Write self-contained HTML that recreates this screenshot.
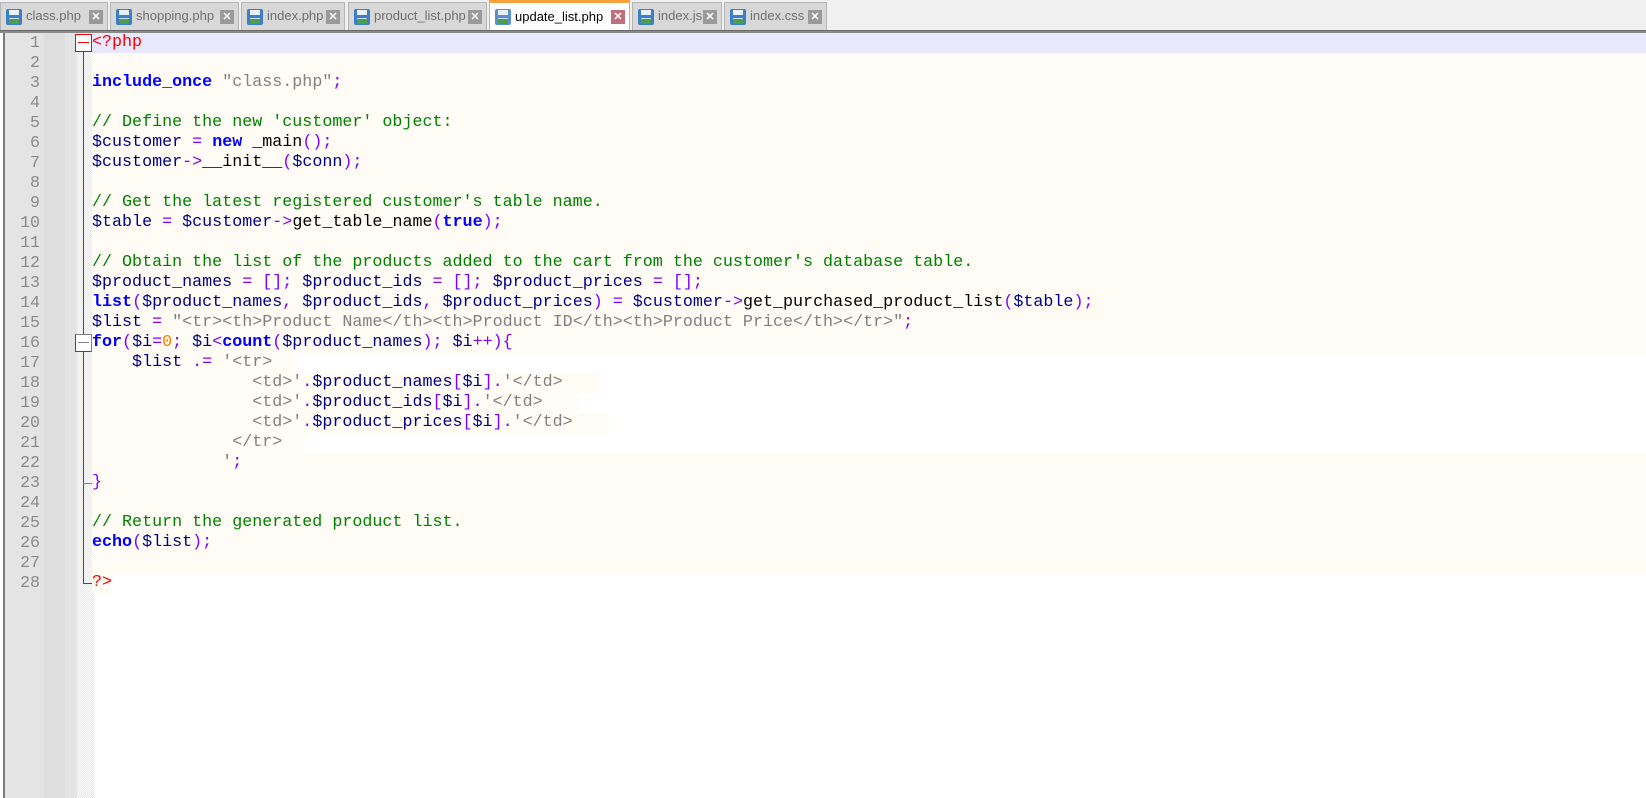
<!DOCTYPE html>
<html><head><meta charset="utf-8"><style>
*{margin:0;padding:0;box-sizing:border-box}
body{width:1646px;height:796px;background:#fff;position:relative;overflow:hidden;font-family:"Liberation Mono",monospace}
#tabs{position:absolute;left:0;top:0;width:1646px;height:30px;background:#f0f0f0}
.tab{position:absolute;top:2px;height:28px;background:#d8d8d8;border:1px solid #b5b5b5;border-bottom:none;font:13px "Liberation Sans",sans-serif;color:#6f6f6f;line-height:26px;padding-left:25px}
.tab .ic{position:absolute;left:5px;top:6px;width:16px;height:16px;background:#3d7fc4;border-radius:2px}
.tab .ic:before{content:"";position:absolute;left:3px;top:1px;width:10px;height:5px;background:#e8f0f8}
.tab .ic:after{content:"";position:absolute;left:3px;top:9px;width:10px;height:5px;background:#4aa04a;border-top:1px solid #cde}
.tab .x{position:absolute;right:4px;top:7px;width:14px;height:14px;background:#9a9a9a;color:#fff;font-size:11px;line-height:14px;text-align:center;font-weight:bold}
.tab.act{background:#fff;color:#000;top:0;height:31px;border-top:3px solid #f8a13d;line-height:27px}
.tab.act .x{background:#c0707a}
#bar{position:absolute;left:0;top:30px;width:1646px;height:3px;background:#8a8a8a;border-top:1px solid #6a6a6a}
#lb{position:absolute;left:3px;top:33px;width:2px;height:765px;background:#7a7a7a}
#g1{position:absolute;left:5px;top:33px;width:39px;height:765px;background:#e4e4e4}
#g2{position:absolute;left:44px;top:33px;width:21px;height:765px;background:#dedede}
#g3{position:absolute;left:65px;top:33px;width:12px;height:765px;background:#e4e4e4}
#fold{position:absolute;left:77px;top:33px;width:18px;height:765px;background-color:#fff;background-image:linear-gradient(45deg,#e6e6e6 25%,transparent 25%,transparent 75%,#e6e6e6 75%),linear-gradient(45deg,#e6e6e6 25%,transparent 25%,transparent 75%,#e6e6e6 75%);background-size:2px 2px;background-position:0 0,1px 1px}
.num{position:absolute;left:5px;width:35px;text-align:right;color:#8a8a8a;font-size:16.6px;line-height:20px;height:20px}
.ln{position:absolute;left:92px;height:20px;line-height:20px;font-size:16.7px;white-space:pre;color:#000080}
.full{right:0;background:#fefcf5}
.cur{background:#e8e8ff}
.part{background:#fefcf5;display:block;height:20px}
.k{color:#0000ff;font-weight:bold}.c{color:#008000}.s{color:#808080}.o{color:#8000ff}.n{color:#ff8000}.r{color:#ff0000}.b{color:#000}
.fl{position:absolute;background:#f00}
</style></head><body>
<div id="tabs">
<div class="tab" style="left:0;width:108px"><span class="ic"></span>class.php<span class="x">✕</span></div>
<div class="tab" style="left:110px;width:129px"><span class="ic"></span>shopping.php<span class="x">✕</span></div>
<div class="tab" style="left:241px;width:104px"><span class="ic"></span>index.php<span class="x">✕</span></div>
<div class="tab" style="left:348px;width:139px"><span class="ic"></span>product_list.php<span class="x">✕</span></div>
<div class="tab act" style="left:489px;width:141px"><span class="ic" style="background:#5a8fd0"></span>update_list.php<span class="x">✕</span></div>
<div class="tab" style="left:632px;width:90px"><span class="ic"></span>index.js<span class="x">✕</span></div>
<div class="tab" style="left:724px;width:103px"><span class="ic"></span>index.css<span class="x">✕</span></div>
</div>
<div id="bar"></div>
<div id="lb"></div><div id="g1"></div><div id="g2"></div><div id="g3"></div><div id="fold"></div>

<div class="ln full cur" style="top:33px"><span class="r">&lt;?php</span></div>
<div class="ln full" style="top:53px"> </div>
<div class="ln full" style="top:73px"><span class="k">include_once</span> <span class="s">"class.php"</span><span class="o">;</span></div>
<div class="ln full" style="top:93px"> </div>
<div class="ln full" style="top:113px"><span class="c">// Define the new 'customer' object:</span></div>
<div class="ln full" style="top:133px">$customer <span class="o">=</span> <span class="k">new</span> <span class="b">_main</span><span class="o">();</span></div>
<div class="ln full" style="top:153px">$customer<span class="o">-&gt;</span><span class="b">__init__</span><span class="o">(</span>$conn<span class="o">);</span></div>
<div class="ln full" style="top:173px"> </div>
<div class="ln full" style="top:193px"><span class="c">// Get the latest registered customer's table name.</span></div>
<div class="ln full" style="top:213px">$table <span class="o">=</span> $customer<span class="o">-&gt;</span><span class="b">get_table_name</span><span class="o">(</span><span class="k">true</span><span class="o">);</span></div>
<div class="ln full" style="top:233px"> </div>
<div class="ln full" style="top:253px"><span class="c">// Obtain the list of the products added to the cart from the customer's database table.</span></div>
<div class="ln full" style="top:273px">$product_names <span class="o">= [];</span> $product_ids <span class="o">= [];</span> $product_prices <span class="o">= [];</span></div>
<div class="ln full" style="top:293px"><span class="k">list</span><span class="o">(</span>$product_names<span class="o">,</span> $product_ids<span class="o">,</span> $product_prices<span class="o">) =</span> $customer<span class="o">-&gt;</span><span class="b">get_purchased_product_list</span><span class="o">(</span>$table<span class="o">);</span></div>
<div class="ln full" style="top:313px">$list <span class="o">=</span> <span class="s">"&lt;tr&gt;&lt;th&gt;Product Name&lt;/th&gt;&lt;th&gt;Product ID&lt;/th&gt;&lt;th&gt;Product Price&lt;/th&gt;&lt;/tr&gt;"</span><span class="o">;</span></div>
<div class="ln full" style="top:333px"><span class="k">for</span><span class="o">(</span>$i<span class="o">=</span><span class="n">0</span><span class="o">;</span> $i<span class="o">&lt;</span><span class="k">count</span><span class="o">(</span>$product_names<span class="o">);</span> $i<span class="o">++){</span></div>
<div class="ln" style="top:353px"><span class="part" style="width:202px">    $list <span class="o">.=</span> <span class="s">'&lt;tr&gt;</span></span></div>
<div class="ln" style="top:373px"><span class="part" style="width:506px"><span class="s">                &lt;td&gt;'</span><span class="o">.</span>$product_names<span class="o">[</span>$i<span class="o">].</span><span class="s">'&lt;/td&gt;</span></span></div>
<div class="ln" style="top:393px"><span class="part" style="width:486px"><span class="s">                &lt;td&gt;'</span><span class="o">.</span>$product_ids<span class="o">[</span>$i<span class="o">].</span><span class="s">'&lt;/td&gt;</span></span></div>
<div class="ln" style="top:413px"><span class="part" style="width:517px"><span class="s">                &lt;td&gt;'</span><span class="o">.</span>$product_prices<span class="o">[</span>$i<span class="o">].</span><span class="s">'&lt;/td&gt;</span></span></div>
<div class="ln" style="top:433px"><span class="part" style="width:213px"><span class="s">              &lt;/tr&gt;</span></span></div>
<div class="ln full" style="top:453px"><span class="s">             '</span><span class="o">;</span></div>
<div class="ln full" style="top:473px"><span class="o">}</span></div>
<div class="ln full" style="top:493px"> </div>
<div class="ln full" style="top:513px"><span class="c">// Return the generated product list.</span></div>
<div class="ln full" style="top:533px"><span class="k">echo</span><span class="o">(</span>$list<span class="o">);</span></div>
<div class="ln full" style="top:553px"> </div>
<div class="ln" style="top:573px;background:#fefcf5"><span class="r">?&gt;</span></div>

<div class="num" style="top:33px">1</div><div class="num" style="top:53px">2</div><div class="num" style="top:73px">3</div><div class="num" style="top:93px">4</div><div class="num" style="top:113px">5</div><div class="num" style="top:133px">6</div><div class="num" style="top:153px">7</div><div class="num" style="top:173px">8</div><div class="num" style="top:193px">9</div><div class="num" style="top:213px">10</div><div class="num" style="top:233px">11</div><div class="num" style="top:253px">12</div><div class="num" style="top:273px">13</div><div class="num" style="top:293px">14</div><div class="num" style="top:313px">15</div><div class="num" style="top:333px">16</div><div class="num" style="top:353px">17</div><div class="num" style="top:373px">18</div><div class="num" style="top:393px">19</div><div class="num" style="top:413px">20</div><div class="num" style="top:433px">21</div><div class="num" style="top:453px">22</div><div class="num" style="top:473px">23</div><div class="num" style="top:493px">24</div><div class="num" style="top:513px">25</div><div class="num" style="top:533px">26</div><div class="num" style="top:553px">27</div><div class="num" style="top:573px">28</div>

<div style="position:absolute;left:75px;top:34px;width:17px;height:18px;border:1px solid #f00;background:#fff"></div>
<div class="fl" style="left:78px;top:42px;width:11px;height:1px"></div>
<div class="fl" style="left:83px;top:52px;width:1px;height:531px"></div>
<div style="position:absolute;left:75px;top:334px;width:17px;height:18px;border:1px solid #808080;border-left-color:#f00;border-bottom-color:#f00;background:#fff"></div>
<div style="position:absolute;left:78px;top:342px;width:11px;height:1px;background:#808080"></div>
<div style="position:absolute;left:83px;top:483px;width:9px;height:1px;background:#808080"></div>
<div class="fl" style="left:83px;top:583px;width:9px;height:1px"></div>
</body></html>
